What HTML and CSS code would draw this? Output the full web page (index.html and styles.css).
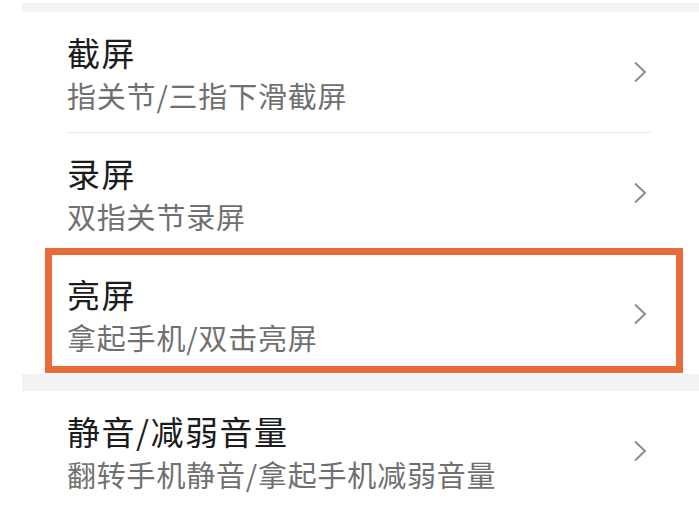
FILE: index.html
```html
<!DOCTYPE html>
<html lang="zh-CN">
<head>
  <meta charset="UTF-8">
  <meta name="viewport" content="width=device-width, initial-scale=1.0">
  <title>手势控制</title>
  <link rel="stylesheet" href="styles.css">
</head>
<body>
  <div class="band band-top"></div>
  <section class="group">
    <div class="item">
      <div class="item-body">
        <div class="item-text">
          <p class="item-title">截屏</p>
          <p class="item-sub">指关节/三指下滑截屏</p>
        </div>
        <svg class="chevron" width="14" height="22" viewBox="0 0 14 22"><path d="M2 1.5 L12 11 L2 20.5"/></svg>
      </div>
    </div>
    <div class="item">
      <div class="item-body">
        <div class="item-text">
          <p class="item-title">录屏</p>
          <p class="item-sub">双指关节录屏</p>
        </div>
        <svg class="chevron" width="14" height="22" viewBox="0 0 14 22"><path d="M2 1.5 L12 11 L2 20.5"/></svg>
      </div>
    </div>
    <div class="item item-marked">
      <div class="item-body">
        <div class="item-text">
          <p class="item-title">亮屏</p>
          <p class="item-sub">拿起手机/双击亮屏</p>
        </div>
        <svg class="chevron" width="14" height="22" viewBox="0 0 14 22"><path d="M2 1.5 L12 11 L2 20.5"/></svg>
      </div>
    </div>
  </section>
  <div class="band band-gap"></div>
  <section class="group">
    <div class="item">
      <div class="item-body">
        <div class="item-text">
          <p class="item-title">静音/减弱音量</p>
          <p class="item-sub">翻转手机静音/拿起手机减弱音量</p>
        </div>
        <svg class="chevron" width="14" height="22" viewBox="0 0 14 22"><path d="M2 1.5 L12 11 L2 20.5"/></svg>
      </div>
    </div>
  </section>
</body>
</html>
```

FILE: styles.css
```css
body {
  margin: 0;
  padding: 0;
  background-color: #fff;
  font-family: "Noto Sans CJK SC", "Noto Sans", sans-serif;
  overflow: hidden;
}
.band {
  margin-left: 22px;
  background-color: #f3f3f3;
}
.band-top {
  margin-top: 3px;
  height: 9px;
}
.band-gap {
  height: 17px;
}
.item {
  position: relative;
  padding: 0 47px 0 67px;
}
.item-body {
  display: flex;
  align-items: center;
  padding-right: 5px;
  border-bottom: 1px solid #ececec;
}
.item:last-child .item-body {
  border-bottom: none;
}
.item-text {
  flex: 1;
  padding: 18px 0 16px;
}
.item-title {
  margin: 0;
  font-size: 33px;
  line-height: 44px;
  letter-spacing: 1.5px;
  color: #1c1c1c;
}
.item-sub {
  margin: 0;
  font-size: 29px;
  line-height: 42px;
  letter-spacing: 0.8px;
  color: #707070;
}
.chevron {
  fill: none;
  stroke: #8d8d8d;
  stroke-width: 2;
}
.item-marked::after {
  content: "";
  position: absolute;
  top: -6px;
  bottom: 1px;
  left: 45px;
  right: 16px;
  border: 7px solid #e96b3c;
}
```
